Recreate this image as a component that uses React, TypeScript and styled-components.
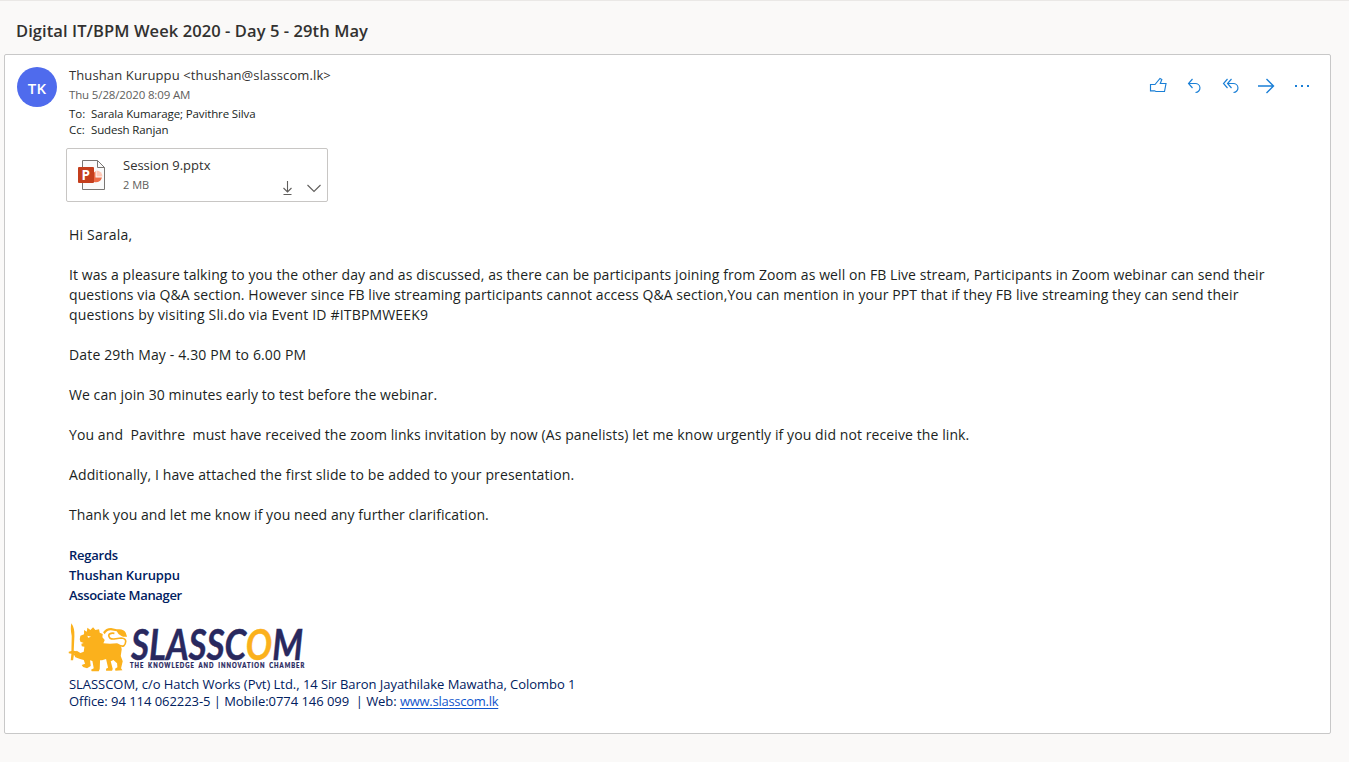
import React from 'react';
import styled, { createGlobalStyle } from 'styled-components';

const GlobalStyle = createGlobalStyle`
  * { box-sizing: border-box; }
  body {
    margin: 0;
    background: #faf9f8;
    font-family: 'Open Sans', 'Noto Sans', sans-serif;
    color: #201f1e;
  }
`;

const Page = styled.div`
  height: 762px;
  padding: 0 18px 28px 4px;
  border-top: 1px solid #eae8e6;
  display: flex;
  flex-direction: column;
  overflow: hidden;
`;

const Subject = styled.h1`
  margin: 0;
  height: 53px;
  padding: 18px 0 0 12px;
  font-size: 16.5px;
  line-height: 24px;
  font-weight: 600;
  color: #323130;
  white-space: pre;
  letter-spacing: 0.08px;
`;

const Card = styled.main`
  flex: 1;
  background: #fff;
  border: 1px solid #c8c8c8;
  border-radius: 2px;
  padding: 11px 18px 0 12px;
`;

const Header = styled.header`
  display: flex;
  align-items: flex-start;
  height: 82px;
`;

const Avatar = styled.div`
  width: 40px;
  height: 40px;
  margin: 1px 12px 0 0;
  border-radius: 50%;
  background: #4f6bed;
  color: #fff;
  font-size: 15px;
  letter-spacing: 0.3px;
  font-weight: 600;
  display: flex;
  align-items: center;
  justify-content: center;
  padding-top: 2px;
`;

const Meta = styled.div`
  flex: 1;
`;

const Line = styled.div<{ $size: number; $height: number; $track?: number; $color?: string; $weight?: number }>`
  font-size: ${(p) => p.$size}px;
  line-height: ${(p) => p.$height}px;
  letter-spacing: ${(p) => p.$track ?? 0}px;
  color: ${(p) => p.$color ?? 'inherit'};
  font-weight: ${(p) => p.$weight ?? 400};
  white-space: pre;
`;

const Recipients = styled.div`
  display: grid;
  grid-template-columns: 22px auto;
  margin-top: 1px;
`;

const Actions = styled.div`
  display: flex;
  gap: 16px;
  padding-top: 10px;
`;

const Action = styled.svg<{ $stroke?: number }>`
  width: 20px;
  height: 20px;
  fill: none;
  stroke: #1a7fd6;
  stroke-width: ${(p) => p.$stroke ?? 1.15};
`;

const Attachment = styled.section`
  width: 262px;
  height: 54px;
  margin-left: 49px;
  border: 1px solid #c8c6c4;
  border-radius: 2px;
  display: flex;
  padding: 0 5px 0 11px;
`;

const FileIcon = styled.svg`
  width: 28px;
  height: 32px;
  margin: 10px 17px 0 0;
`;

const FileInfo = styled.div`
  flex: 1;
  padding-top: 6px;
`;

const FileActions = styled.div`
  display: flex;
  align-items: flex-end;
  gap: 10px;
  padding-bottom: 5px;
`;

const Glyph = styled.svg`
  width: 16px;
  height: 16px;
  fill: none;
  stroke: #605e5c;
  stroke-width: 1.1;
`;

const Body = styled.article`
  padding: 23px 0 0 52px;
`;

const Paragraph = styled.div`
  margin-bottom: 20px;
`;

const Signature = styled.div`
  color: #002060;
`;

const Logo = styled.svg`
  display: block;
  width: 260px;
  height: 54px;
  margin: 15px 0 2px -5px;
`;

const Link = styled.a`
  color: #1155cc;
  letter-spacing: -0.27px;
  text-decoration: underline;
  text-underline-offset: 2px;
`;

const paragraphs: [string, number][][] = [
  [['Hi Sarala,', 0.2]],
  [
    ['It was a pleasure talking to you the other day and as discussed, as there can be participants joining from Zoom as well on FB Live stream, Participants in Zoom webinar can send their', 0.081],
    ['questions via Q&A section. However since FB live streaming participants cannot access Q&A section,You can mention in your PPT that if they FB live streaming they can send their', 0.082],
    ['questions by visiting Sli.do via Event ID #ITBPMWEEK9', 0.17],
  ],
  [['Date 29th May - 4.30 PM to 6.00 PM', 0.15]],
  [['We can join 30 minutes early to test before the webinar.', 0.065]],
  [['You and  Pavithre  must have received the zoom links invitation by now (As panelists) let me know urgently if you did not receive the link.', 0.092]],
  [['Additionally, I have attached the first slide to be added to your presentation.', 0.125]],
  [['Thank you and let me know if you need any further clarification.', 0.07]],
];

const closing: [string, number][] = [
  ['Regards', -0.25],
  ['Thushan Kuruppu', -0.1],
  ['Associate Manager', -0.33],
];

function SlasscomLogo() {
  return (
    <Logo viewBox="0 0 260 54">
      <g transform="translate(.4 0) scale(.3333)" fill="#fbb11c">
        <path d="M21 10 Q31 24 30 48 L28 92 L36 94 L36 100 L29 101 L26 121 L19 121 L21 101 L13 100 L13 95 L21 93 L22 48 Q17 26 21 10Z" />
        <path d="M48 47 L59 43 L59 30 L67 35 L69 23 L78 30 L86 22 L93 30 L104 28 L106 38 L115 42 L114 52 L121 60 L117 70 Q136 72 158 70 Q170 73 172 88 L169 108 L175 124 L170 145 L174 151 L153 152 L152 146 L159 142 L158 130 L147 120 L139 124 L145 147 L143 152 L125 152 L125 146 L131 143 L125 117 L113 121 L107 121 L106 147 L103 154 L82 154 L80 149 L88 145 L84 123 L77 121 L79 138 L68 145 L56 141 L52 135 L62 131 L58 120 L47 117 L33 112 L28 103 L37 92 L48 99 L58 95 L60 80 L52 79 L51 71 L58 69 L48 65 L46 58Z" />
        <path d="M164 76 Q183 84 184 64 Q184 55 170 54 L149 57 Q133 58 133 46 Q135 38 150 40" fill="none" stroke="#fbb11c" strokeWidth="5" />
        <path d="M116 37 Q124 24 140 24 L157 28 Q178 25 184 38 L188 50 Q178 52 170 47 Q160 42 157 34 L139 31 Q127 31 121 43Z" />
        <path d="M69 47 L80 50 L71 53Z" fill="#fff" />
      </g>
      <text x="67" y="40.4" fontFamily="Lato, sans-serif" fontWeight="700" fontStyle="italic" fontSize="41.5" fill="#29295f" stroke="#29295f" strokeWidth=".4" textLength="172" lengthAdjust="spacingAndGlyphs">
        SLASSC<tspan fill="#fbb11c" stroke="#fbb11c">O</tspan>M
      </text>
      <text transform="translate(66 48.2) scale(.88 1)" fontFamily="Lato, sans-serif" fontWeight="900" fontSize="6.6" fill="#29295f" stroke="#29295f" strokeWidth=".25" wordSpacing="1.5" textLength="198" lengthAdjust="spacing">
        THE KNOWLEDGE AND INNOVATION CHAMBER
      </text>
    </Logo>
  );
}

export default function App() {
  return (
    <Page>
      <GlobalStyle />
      <Subject>Digital IT/BPM Week 2020 - Day 5 - 29th May</Subject>
      <Card>
        <Header>
          <Avatar>TK</Avatar>
          <Meta>
            <Line $size={13} $height={18} $track={0.12} $color="#323130">{'Thushan Kuruppu <thushan@slasscom.lk>'}</Line>
            <Line $size={11.5} $height={21} $track={-0.14} $color="#605e5c">Thu 5/28/2020 8:09 AM</Line>
            <Recipients>
              <Line $size={11.5} $height={16}>To:</Line>
              <Line $size={11.5} $height={16} $track={-0.13}>Sarala Kumarage; Pavithre Silva</Line>
              <Line $size={11.5} $height={16}>Cc:</Line>
              <Line $size={11.5} $height={16} $track={-0.15}>Sudesh Ranjan</Line>
            </Recipients>
          </Meta>
          <Actions>
            <Action viewBox="0 0 20 20"><path d="M2.5 8.5H7L12 2.5L13.8 3.5L12.3 7.5H18L16.5 15.5H8L6.5 14.8H2.5Z" /></Action>
            <Action viewBox="0 0 20 20"><path d="M8.5 3L4.5 7.5L8.5 12M4.5 7.5H11A4.7 4.5 0 0 1 11.5 16.5" /></Action>
            <Action viewBox="0 0 20 20"><path d="M7.5 3L3.5 7.5L7.5 12M11.5 3L7.5 7.5L11.5 12M7.5 7.5H13A4.7 4.5 0 0 1 13.5 16.5" /></Action>
            <Action viewBox="0 0 20 20" $stroke={1.4}><path d="M2 10H17.5M10.5 3L17.5 10L10.5 17" /></Action>
            <Action viewBox="0 0 20 20" $stroke={1.8}><path d="M3 10h2M9 10h2M15 10h2" /></Action>
          </Actions>
        </Header>
        <Attachment>
          <FileIcon viewBox="0 0 28 32">
            <path d="M4.5 1.5H19.5L26.5 8.5V30.5H4.5Z" fill="#fafafa" stroke="#797673" />
            <path d="M19.5 1.5V8.5H26.5" fill="none" stroke="#797673" />
            <path d="M18.5 11.5A6 6 0 0 1 24.5 17.5H18.5Z" fill="#ffc7b5" />
            <path d="M17.5 12V18.5H24A6.5 6.5 0 0 1 11.5 18.5Z" fill="#ed6c47" />
            <rect y="8" width="16" height="16" rx="1" fill="#c43e1c" />
            <text x="3.4" y="20.6" fontSize="13.5" fontWeight="700" fontFamily="Open Sans, sans-serif" fill="#fff">P</text>
          </FileIcon>
          <FileInfo>
            <Line $size={13} $height={20} $color="#323130">Session 9.pptx</Line>
            <Line $size={11} $height={20} $color="#605e5c">2 MB</Line>
          </FileInfo>
          <FileActions>
            <Glyph viewBox="0 0 16 16"><path d="M7.5 1V12M3.5 8L7.5 12L11.5 8M3.5 14.5H11.5" /></Glyph>
            <Glyph viewBox="0 0 16 16"><path d="M1.5 5L8 11.5L14.5 5" /></Glyph>
          </FileActions>
        </Attachment>
        <Body>
          {paragraphs.map((lines, i) => (
            <Paragraph key={i}>
              {lines.map(([text, track]) => (
                <Line key={text} $size={14} $height={20} $track={track}>{text}</Line>
              ))}
            </Paragraph>
          ))}
          <Signature>
            {closing.map(([text, track]) => (
              <Line key={text} $size={13} $height={20} $weight={600} $track={track}>{text}</Line>
            ))}
            <SlasscomLogo />
            <Line $size={13} $height={17} $track={-0.04}>SLASSCOM, c/o Hatch Works (Pvt) Ltd., 14 Sir Baron Jayathilake Mawatha, Colombo 1</Line>
            <Line $size={13} $height={17} $track={-0.05}>
              {'Office: 94 114 062223-5 | Mobile:0774 146 099  | Web: '}<Link>www.slasscom.lk</Link>
            </Line>
          </Signature>
        </Body>
      </Card>
    </Page>
  );
}
